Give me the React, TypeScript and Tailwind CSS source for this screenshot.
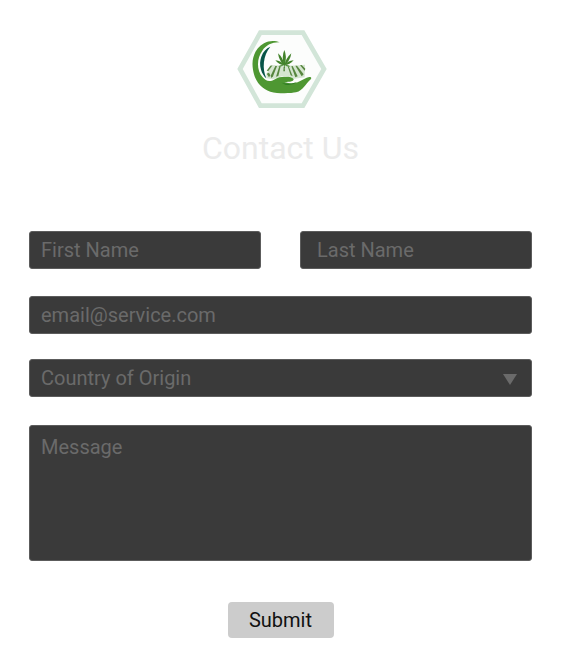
const control =
  "w-full rounded-[3px] border border-[#5c5c5c] bg-[#3a3a3a] text-xl text-[#6a6a6a] placeholder:text-[#6a6a6a] placeholder:opacity-100 outline-none focus:border-[#9a9a9a]";

function Logo() {
  return (
    <svg
      viewBox="0 0 300 270"
      className="h-[90px] w-[100px]"
      role="img"
      aria-label="Crescent, leaf and field held in a hand"
    >
      <path d="M27 135 88 26H216L279 135 216 245H88Z" fill="#fcfdfc" stroke="#d2e5d8" strokeWidth="14" />
      <g transform="translate(2 0)">
        {/* field */}
        <path d="M104 151C111 136 118 127 126 123Q170 127 220 122L219 160 184 165Q174 154 151 157L123 166 105 163Z" fill="#d5e5d0" />
        <g fill="#57863f">
          <path d="M116 125 123 124 110 141 105 140Z" />
          <path d="M105 149 112 146 116 154 112 160Z" />
          <path d="M131 126 136 126 124 157 119 162 117 155Z" />
          <path d="M143 127 147 127 140 156 133 158Z" />
          <path d="M156 128H159L160 142 155 142Z" />
          <path d="M168 127 171 127 183 157 177 154Z" />
          <path d="M179 127 183 126 198 157 191 160Z" />
          <path d="M191 125 196 125 216 151 210 157Z" />
          <path d="M205 124 210 123 221 134 219 140Z" />
        </g>
        {/* leaf */}
        <g fill="#43832b">
          <path d="M157 124Q149 98 158 78Q167 98 159 124Z" />
          <path d="M157 124Q142 110 139 88Q154 101 159 124Z" />
          <path d="M158 124Q163 102 179 88Q176 109 159 124Z" />
          <path d="M157 124Q142 122 131 109Q149 110 159 124Z" />
          <path d="M158 124Q167 110 186 109Q174 122 159 124Z" />
          <path d="M157 123Q147 129 140 127Q148 122 159 123Z" />
          <path d="M158 123Q169 122 176 127Q167 129 159 123Z" />
          <path d="M157 119H159V132H157Z" />
        </g>
        {/* crescent running into the open hand */}
        <path
          d="M144 55C130 49 112 49 97 58C70 73 58 103 64 137C69 170 88 194 116 203C139 210 180 208 193 205C216 199 220 180 238 165C241 158 233 158 225 161L207 170C201 173 195 176 187 177C180 180 170 178 158 174C175 174 185 173 186 166C181 157 163 158 151 159C139 159 132 165 121 170C108 173 101 169 93 160C73 137 76 101 92 80C104 62 123 54 144 55Z"
          fill="#4e9732"
        />
        <path d="M116 68C91 78 80 110 88 137C91 148 98 158 104 163C91 133 94 95 116 68Z" fill="#075447" />
        <path d="M150 176Q174 183 196 174Q182 186 161 182Z" fill="#2f7d24" />
      </g>
    </svg>
  );
}

export default function App() {
  return (
    <main className="min-h-screen bg-white pt-6 pr-[30px] pb-4 pl-[29px] font-['Roboto','Open_Sans',sans-serif]">
      <header className="flex flex-col items-center">
        <Logo />
        <h1 className="mt-3 text-[32px] leading-[44px] text-[#ebebeb]">Contact Us</h1>
      </header>

      <form className="mt-[61px] flex flex-col" onSubmit={(e) => e.preventDefault()}>
        <div className="flex gap-[39px]">
          <label className="flex min-w-0 flex-1">
            <input
              type="text"
              aria-label="First Name"
              placeholder="First Name"
              className={`${control} h-[38px] px-[11px]`}
            />
          </label>
          <label className="flex min-w-0 flex-1">
            <input
              type="text"
              aria-label="Last Name"
              placeholder="Last Name"
              className={`${control} h-[38px] px-4`}
            />
          </label>
        </div>
        <label className="mt-[27px] flex">
          <input
            type="email"
            aria-label="Email"
            placeholder="email@service.com"
            className={`${control} h-[38px] px-[11px]`}
          />
        </label>
        <label className="relative mt-[25px] flex">
          <select
            aria-label="Country of Origin"
            defaultValue=""
            className={`${control} h-[38px] appearance-none px-[11px]`}
          >
            <option value="">Country of Origin</option>
          </select>
          <svg
            viewBox="0 0 14 11"
            className="pointer-events-none absolute top-[15px] right-[15px] h-[11px] w-[14px]"
            aria-hidden="true"
          >
            <path d="M0 0H14L7 11Z" fill="#6a6a6a" />
          </svg>
        </label>
        <label className="mt-7 flex">
          <textarea
            aria-label="Message"
            placeholder="Message"
            className={`${control} block h-[136px] resize-none px-[11px] py-[7px] leading-7`}
          />
        </label>
        <button
          type="submit"
          className="mt-[41px] h-9 w-[106px] self-center rounded-[4px] bg-[#cccccc] text-xl text-[#111111]"
        >
          Submit
        </button>
      </form>
    </main>
  );
}
